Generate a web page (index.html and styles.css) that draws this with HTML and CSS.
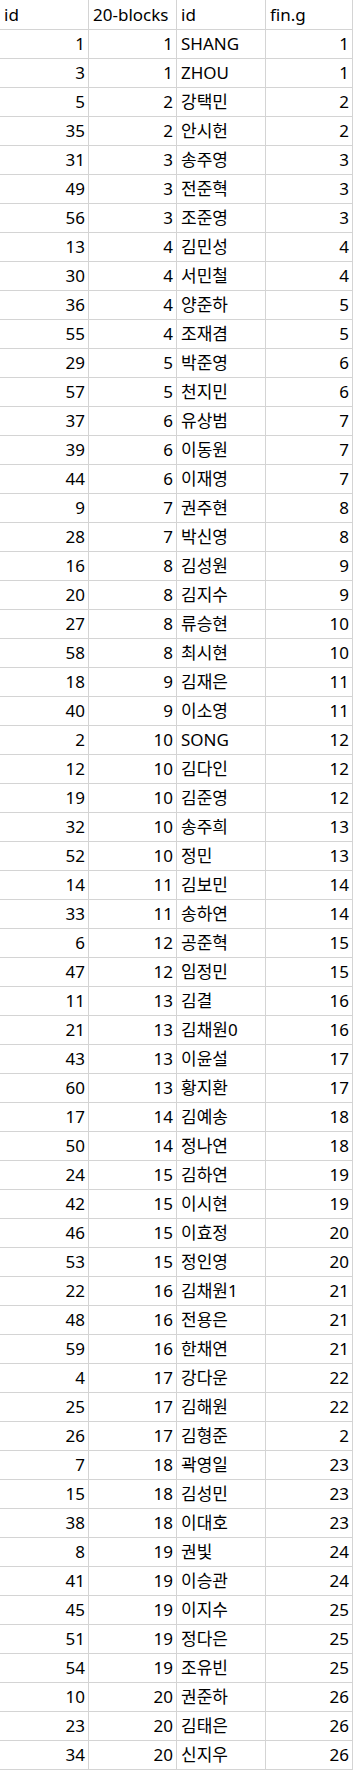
FILE: index.html
```html
<!DOCTYPE html>
<html lang="ko">
<head>
<meta charset="utf-8">
<title>sheet</title>
<link rel="stylesheet" href="styles.css">
</head>
<body>
<div class="sheet">
<div class="c h">id</div><div class="c h">20-blocks</div><div class="c h">id</div><div class="c h">fin.g</div>
<div class="c n">1</div><div class="c n">1</div><div class="c t">SHANG</div><div class="c n">1</div>
<div class="c n">3</div><div class="c n">1</div><div class="c t">ZHOU</div><div class="c n">1</div>
<div class="c n">5</div><div class="c n">2</div><div class="c t">강택민</div><div class="c n">2</div>
<div class="c n">35</div><div class="c n">2</div><div class="c t">안시헌</div><div class="c n">2</div>
<div class="c n">31</div><div class="c n">3</div><div class="c t">송주영</div><div class="c n">3</div>
<div class="c n">49</div><div class="c n">3</div><div class="c t">전준혁</div><div class="c n">3</div>
<div class="c n">56</div><div class="c n">3</div><div class="c t">조준영</div><div class="c n">3</div>
<div class="c n">13</div><div class="c n">4</div><div class="c t">김민성</div><div class="c n">4</div>
<div class="c n">30</div><div class="c n">4</div><div class="c t">서민철</div><div class="c n">4</div>
<div class="c n">36</div><div class="c n">4</div><div class="c t">양준하</div><div class="c n">5</div>
<div class="c n">55</div><div class="c n">4</div><div class="c t">조재겸</div><div class="c n">5</div>
<div class="c n">29</div><div class="c n">5</div><div class="c t">박준영</div><div class="c n">6</div>
<div class="c n">57</div><div class="c n">5</div><div class="c t">천지민</div><div class="c n">6</div>
<div class="c n">37</div><div class="c n">6</div><div class="c t">유상범</div><div class="c n">7</div>
<div class="c n">39</div><div class="c n">6</div><div class="c t">이동원</div><div class="c n">7</div>
<div class="c n">44</div><div class="c n">6</div><div class="c t">이재영</div><div class="c n">7</div>
<div class="c n">9</div><div class="c n">7</div><div class="c t">권주현</div><div class="c n">8</div>
<div class="c n">28</div><div class="c n">7</div><div class="c t">박신영</div><div class="c n">8</div>
<div class="c n">16</div><div class="c n">8</div><div class="c t">김성원</div><div class="c n">9</div>
<div class="c n">20</div><div class="c n">8</div><div class="c t">김지수</div><div class="c n">9</div>
<div class="c n">27</div><div class="c n">8</div><div class="c t">류승현</div><div class="c n">10</div>
<div class="c n">58</div><div class="c n">8</div><div class="c t">최시현</div><div class="c n">10</div>
<div class="c n">18</div><div class="c n">9</div><div class="c t">김재은</div><div class="c n">11</div>
<div class="c n">40</div><div class="c n">9</div><div class="c t">이소영</div><div class="c n">11</div>
<div class="c n">2</div><div class="c n">10</div><div class="c t">SONG</div><div class="c n">12</div>
<div class="c n">12</div><div class="c n">10</div><div class="c t">김다인</div><div class="c n">12</div>
<div class="c n">19</div><div class="c n">10</div><div class="c t">김준영</div><div class="c n">12</div>
<div class="c n">32</div><div class="c n">10</div><div class="c t">송주희</div><div class="c n">13</div>
<div class="c n">52</div><div class="c n">10</div><div class="c t">정민</div><div class="c n">13</div>
<div class="c n">14</div><div class="c n">11</div><div class="c t">김보민</div><div class="c n">14</div>
<div class="c n">33</div><div class="c n">11</div><div class="c t">송하연</div><div class="c n">14</div>
<div class="c n">6</div><div class="c n">12</div><div class="c t">공준혁</div><div class="c n">15</div>
<div class="c n">47</div><div class="c n">12</div><div class="c t">임정민</div><div class="c n">15</div>
<div class="c n">11</div><div class="c n">13</div><div class="c t">김결</div><div class="c n">16</div>
<div class="c n">21</div><div class="c n">13</div><div class="c t">김채원0</div><div class="c n">16</div>
<div class="c n">43</div><div class="c n">13</div><div class="c t">이윤설</div><div class="c n">17</div>
<div class="c n">60</div><div class="c n">13</div><div class="c t">황지환</div><div class="c n">17</div>
<div class="c n">17</div><div class="c n">14</div><div class="c t">김예송</div><div class="c n">18</div>
<div class="c n">50</div><div class="c n">14</div><div class="c t">정나연</div><div class="c n">18</div>
<div class="c n">24</div><div class="c n">15</div><div class="c t">김하연</div><div class="c n">19</div>
<div class="c n">42</div><div class="c n">15</div><div class="c t">이시현</div><div class="c n">19</div>
<div class="c n">46</div><div class="c n">15</div><div class="c t">이효정</div><div class="c n">20</div>
<div class="c n">53</div><div class="c n">15</div><div class="c t">정인영</div><div class="c n">20</div>
<div class="c n">22</div><div class="c n">16</div><div class="c t">김채원1</div><div class="c n">21</div>
<div class="c n">48</div><div class="c n">16</div><div class="c t">전용은</div><div class="c n">21</div>
<div class="c n">59</div><div class="c n">16</div><div class="c t">한채연</div><div class="c n">21</div>
<div class="c n">4</div><div class="c n">17</div><div class="c t">강다운</div><div class="c n">22</div>
<div class="c n">25</div><div class="c n">17</div><div class="c t">김해원</div><div class="c n">22</div>
<div class="c n">26</div><div class="c n">17</div><div class="c t">김형준</div><div class="c n">2</div>
<div class="c n">7</div><div class="c n">18</div><div class="c t">곽영일</div><div class="c n">23</div>
<div class="c n">15</div><div class="c n">18</div><div class="c t">김성민</div><div class="c n">23</div>
<div class="c n">38</div><div class="c n">18</div><div class="c t">이대호</div><div class="c n">23</div>
<div class="c n">8</div><div class="c n">19</div><div class="c t">권빛</div><div class="c n">24</div>
<div class="c n">41</div><div class="c n">19</div><div class="c t">이승관</div><div class="c n">24</div>
<div class="c n">45</div><div class="c n">19</div><div class="c t">이지수</div><div class="c n">25</div>
<div class="c n">51</div><div class="c n">19</div><div class="c t">정다은</div><div class="c n">25</div>
<div class="c n">54</div><div class="c n">19</div><div class="c t">조유빈</div><div class="c n">25</div>
<div class="c n">10</div><div class="c n">20</div><div class="c t">권준하</div><div class="c n">26</div>
<div class="c n">23</div><div class="c n">20</div><div class="c t">김태은</div><div class="c n">26</div>
<div class="c n">34</div><div class="c n">20</div><div class="c t">신지우</div><div class="c n">26</div>
</div>
</body>
</html>
```
FILE: styles.css
```css
html, body {
  margin: 0;
  padding: 0;
  background: #ffffff;
}

.sheet {
  display: grid;
  grid-template-columns: 89px 88px 89px 87px;
  grid-template-rows: 30px;
  grid-auto-rows: 29px;
  width: 353px;
  font-family: "Noto Sans", "Noto Sans CJK KR", sans-serif;
  font-size: 17px;
  color: #000000;
}

.c {
  box-sizing: border-box;
  border-right: 1px solid #d4d4d4;
  border-bottom: 1px solid #d4d4d4;
  line-height: 28px;
  white-space: nowrap;
  overflow: hidden;
}

.h {
  line-height: 29px;
  padding-left: 4px;
}

.t {
  padding-left: 4px;
}

.n {
  text-align: right;
  padding-right: 3px;
}
```
